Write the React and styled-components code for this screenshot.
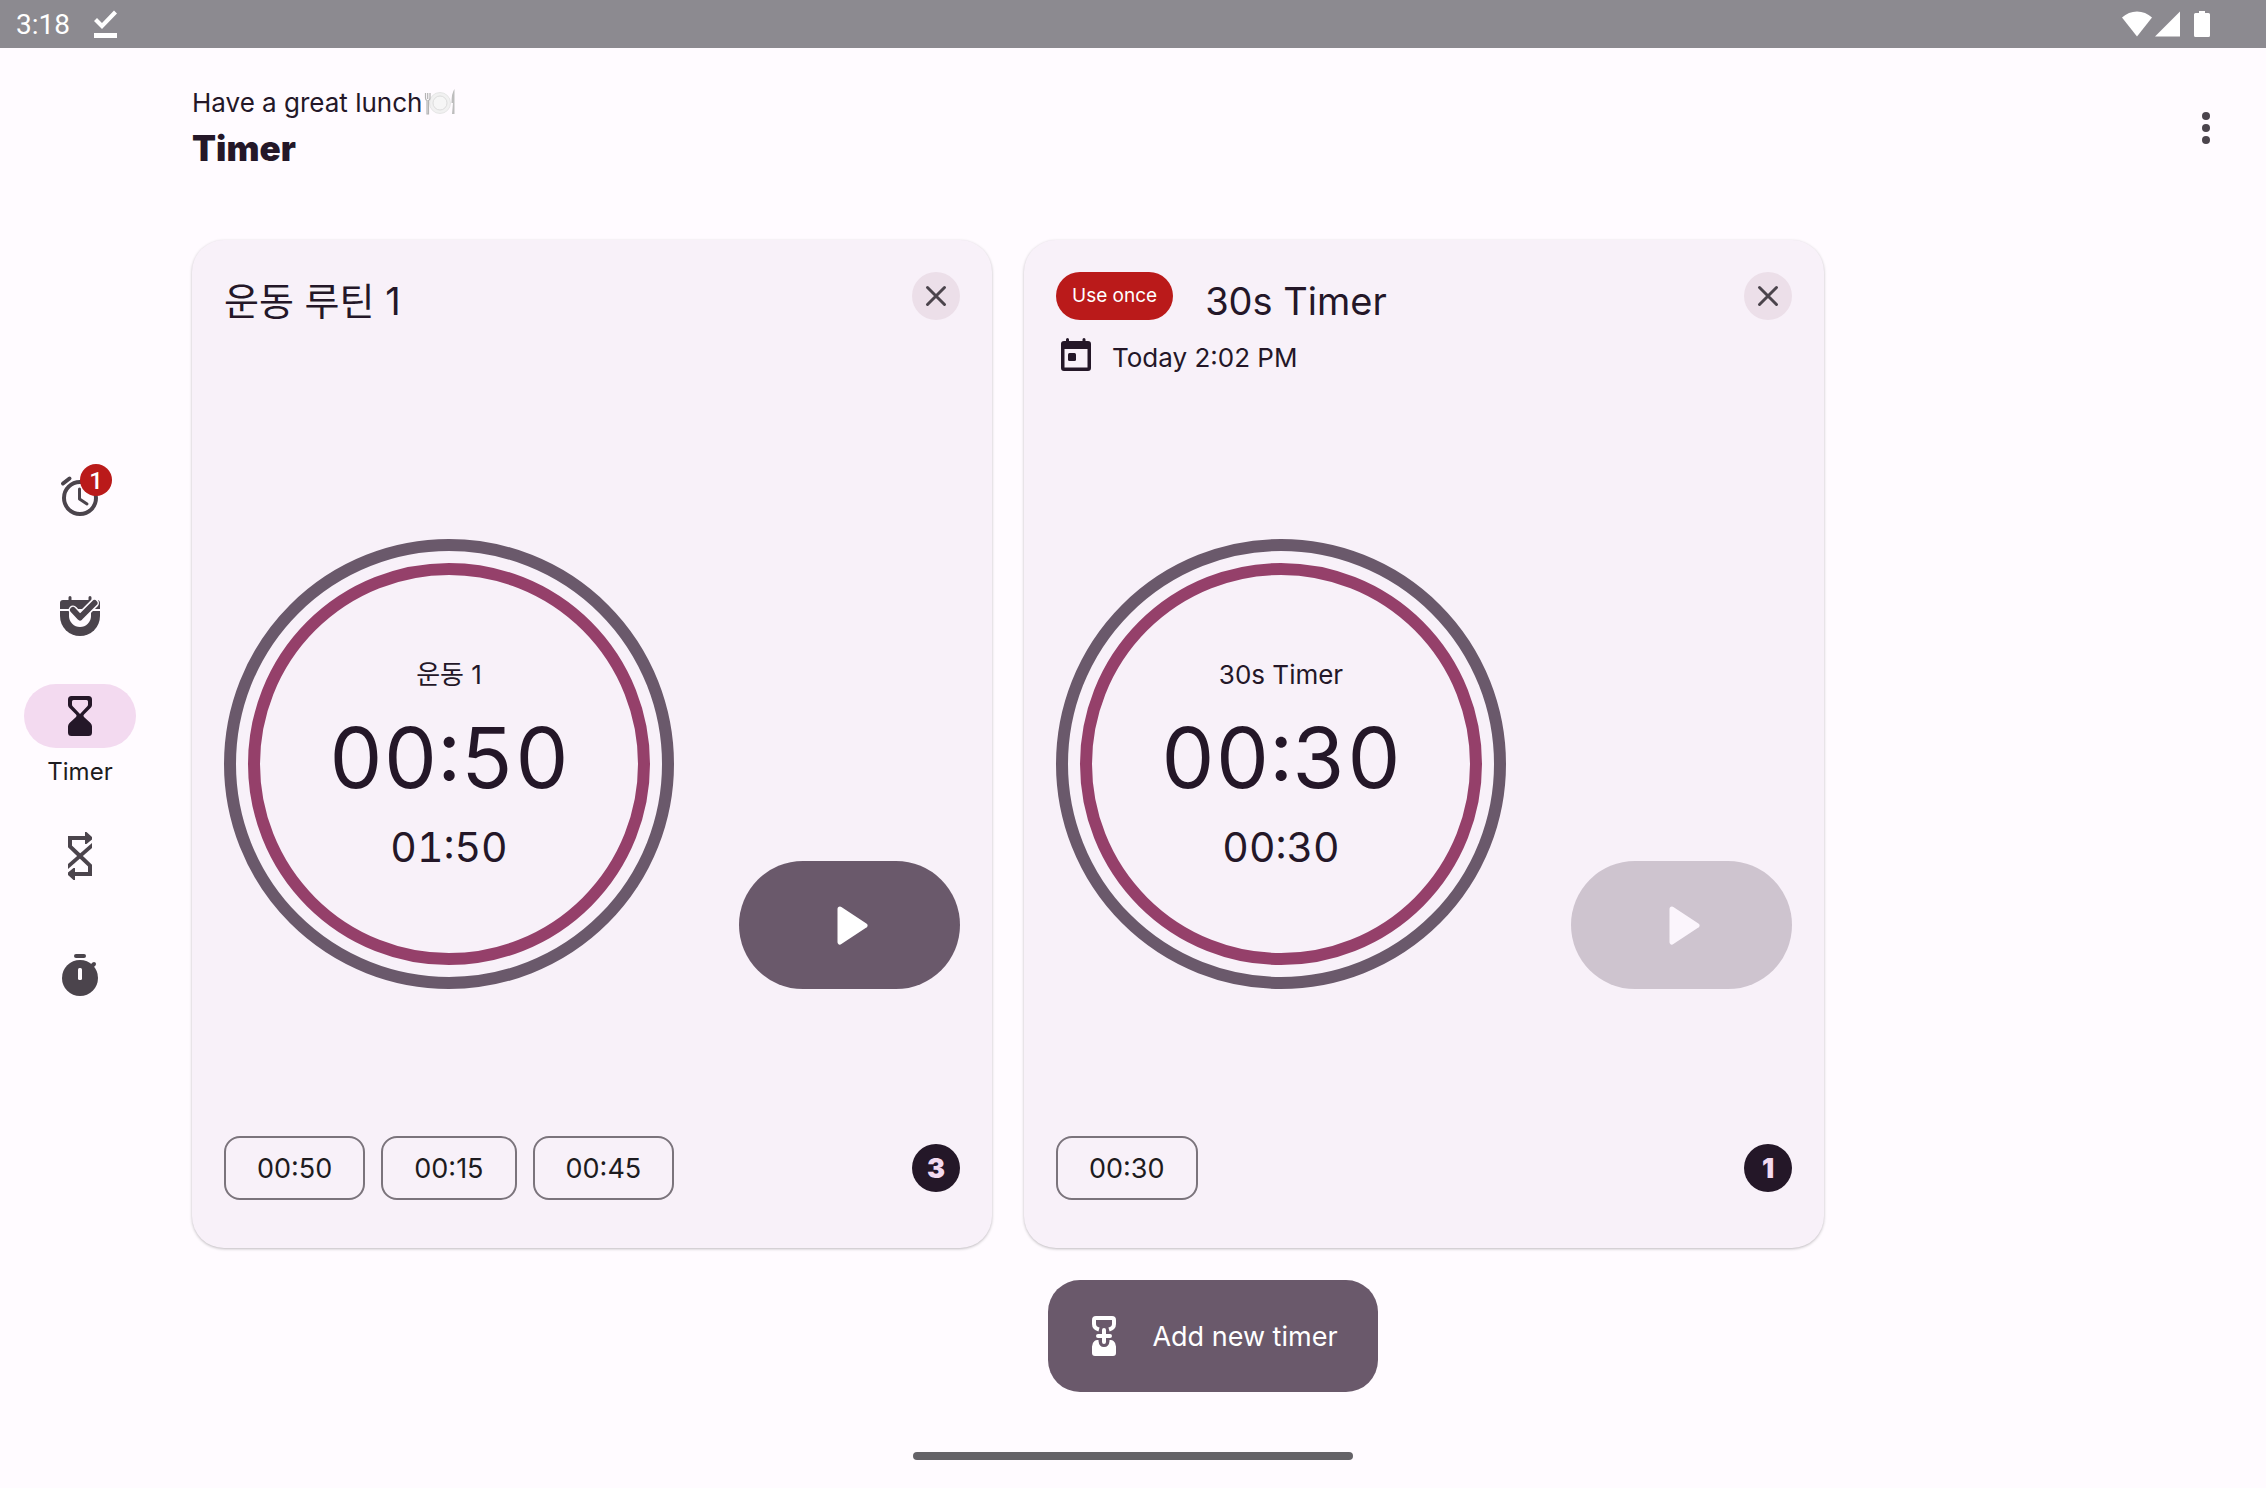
import { useState } from "react";
import styled, { createGlobalStyle } from "styled-components";

const GlobalStyle = createGlobalStyle`
  * {
    box-sizing: border-box;
  }
  body {
    margin: 0;
    background: #fffbff;
    color: #241728;
    font-family: Inter, "Noto Sans CJK KR", sans-serif;
    font-size: 26px;
  }
  button {
    border: none;
    padding: 0;
    font: inherit;
    color: inherit;
    cursor: pointer;
  }
  svg {
    display: block;
    flex-shrink: 0;
  }
`;

const Page = styled.div`
  min-height: 100vh;
  display: flex;
  flex-direction: column;
`;

const StatusBar = styled.div`
  height: 48px;
  padding: 0 56px 0 16px;
  display: flex;
  align-items: center;
  justify-content: space-between;
  background: #8c8a90;
  color: #ffffff;
  font-family: Roboto, sans-serif;
  font-size: 28px;
`;

const StatusGroup = styled.div`
  display: flex;
  align-items: center;
  gap: ${(props) => props.$gap}px;
`;

const Body = styled.div`
  flex: 1;
  display: flex;
`;

const Rail = styled.nav`
  width: 160px;
  flex-shrink: 0;
  padding-bottom: 64px;
  display: flex;
  flex-direction: column;
  align-items: center;
  justify-content: center;
  gap: 8px;
`;

const RailItem = styled.button`
  width: 112px;
  height: 112px;
  display: flex;
  flex-direction: column;
  align-items: center;
  justify-content: center;
  gap: 8px;
  background: transparent;
  color: ${(props) => (props.$active ? "#241728" : "#4b444c")};
`;

const RailIcon = styled.span`
  position: relative;
  width: 112px;
  height: 64px;
  display: flex;
  align-items: center;
  justify-content: center;
  border-radius: 32px;
  background: ${(props) => (props.$active ? "#f3daf0" : "transparent")};
`;

const RailLabel = styled.span`
  font-size: 24px;
  line-height: 32px;
  color: #1d1b20;
`;

const RailBadge = styled.span`
  position: absolute;
  top: 0;
  right: 24px;
  width: 32px;
  height: 32px;
  border-radius: 50%;
  background: #ba1a1a;
  color: #ffffff;
  font-family: Roboto, sans-serif;
  font-size: 24px;
  font-weight: 500;
  line-height: 34px;
  text-align: center;
`;

const Main = styled.main`
  flex: 1;
  min-width: 0;
  display: flex;
  flex-direction: column;
`;

const Header = styled.header`
  height: 160px;
  margin-bottom: 32px;
  padding: 0 36px 0 32px;
  display: flex;
  align-items: center;
  justify-content: space-between;
`;

const Greeting = styled.p`
  margin: 0;
  display: flex;
  align-items: center;
  line-height: 40px;
`;

const Title = styled.h1`
  margin: 0;
  font-size: 35px;
  font-weight: 900;
  line-height: 50px;
`;

const MenuButton = styled.button`
  width: 48px;
  height: 48px;
  background: transparent;
  color: #4b444c;
`;

const CardGrid = styled.div`
  flex: 1;
  padding: 0 32px;
  display: grid;
  grid-template-columns: repeat(auto-fill, minmax(0, 800px));
  gap: 32px;
`;

const Card = styled.section`
  padding: 32px 32px 48px;
  display: flex;
  flex-direction: column;
  border-radius: 32px;
  background: #f8f1f9;
  box-shadow: 0 1px 3px rgba(0, 0, 0, 0.26);
`;

const CardHead = styled.div`
  min-height: 120px;
  display: flex;
  align-items: flex-start;
  justify-content: space-between;
`;

const CardTitleRow = styled.div`
  display: flex;
  align-items: flex-start;
  gap: 32px;
`;

const CardTitle = styled.h2`
  margin: 0;
  font-size: 38px;
  font-weight: 400;
  line-height: 58px;
`;

const OnceTag = styled.span`
  padding: 0 16px;
  border-radius: 24px;
  background: #ba1a1a;
  color: #ffffff;
  font-size: 19px;
  line-height: 48px;
`;

const DateRow = styled.div`
  margin-top: 4px;
  display: flex;
  align-items: flex-start;
  gap: 16px;
  line-height: 48px;
`;

const CloseButton = styled.button`
  width: 48px;
  height: 48px;
  border-radius: 50%;
  background: #ecdfe9;
  color: #4b444c;
`;

const CardBody = styled.div`
  flex: 1;
  display: flex;
  flex-direction: column;
  justify-content: center;
`;

const DialRow = styled.div`
  display: flex;
  align-items: flex-end;
  justify-content: space-between;
`;

const OuterRing = styled.div`
  width: 450px;
  height: 450px;
  padding: 12px;
  border: 12px solid #6a596b;
  border-radius: 50%;
`;

const InnerRing = styled.div`
  height: 100%;
  display: flex;
  flex-direction: column;
  align-items: center;
  justify-content: center;
  border: 12px solid #95406a;
  border-radius: 50%;
`;

const DialLabel = styled.div`
  line-height: 40px;
`;

const DialTime = styled.div`
  font-size: 84px;
  line-height: 126px;
  font-variant-numeric: tabular-nums;
`;

const DialTotal = styled.div`
  font-size: 41px;
  line-height: 52px;
  font-variant-numeric: tabular-nums;
`;

const PlayButton = styled.button`
  width: 221px;
  height: 128px;
  display: flex;
  align-items: center;
  justify-content: center;
  border-radius: 64px;
  background: #6a596b;
  color: #ffffff;

  &:disabled {
    background: #cec4cf;
    color: #fbf5fc;
    cursor: default;
  }
`;

const CardFoot = styled.div`
  display: flex;
  align-items: center;
  justify-content: space-between;
`;

const Chips = styled.div`
  display: flex;
  gap: 16px;
`;

const Chip = styled.button`
  height: 64px;
  padding: 0 31px;
  border: 2px solid #7b747c;
  border-radius: 16px;
  background: transparent;
  color: #1d1b20;
  font-size: 27px;
`;

const Count = styled.span`
  width: 48px;
  height: 48px;
  border-radius: 50%;
  background: #241728;
  color: #f3daf0;
  font-size: 27px;
  font-weight: 900;
  line-height: 50px;
  text-align: center;
`;

const AddButton = styled.button`
  align-self: center;
  height: 112px;
  margin: 32px 0 96px;
  padding: 0 40px 0 32px;
  display: flex;
  align-items: center;
  gap: 24px;
  border-radius: 32px;
  background: #6a596b;
  color: #ffffff;
  font-size: 27px;
`;

const GestureBar = styled.div`
  position: fixed;
  bottom: 28px;
  left: 50%;
  width: 440px;
  height: 8px;
  margin-left: -220px;
  border-radius: 4px;
  background: #646267;
`;

const Icon = ({ size = 48, children }) => (
  <svg width={size} height={size} viewBox={`0 0 ${size} ${size}`} fill="currentColor" aria-hidden="true">
    {children}
  </svg>
);

const AlarmIcon = () => (
  <Icon>
    <g fill="none" stroke="currentColor" strokeLinecap="round" strokeLinejoin="round">
      <circle cx="24" cy="26" r="16" strokeWidth="4" />
      <path d="M23.500 17v10l7.500 5" strokeWidth="3" />
      <path d="M7 11.500l6.500-5M41 11.500l-6.500-5" strokeWidth="4" />
    </g>
  </Icon>
);

const RoutineIcon = () => (
  <Icon>
    <path d="M12.500 8V5.500a1.500 1.500 0 0 1 3 0V8h17V5.500a1.500 1.500 0 0 1 3 0V8H41a3 3 0 0 1 3 3v6H4v-6a3 3 0 0 1 3-3z" />
    <path d="M4 19h40v5a20 20 0 0 1-40 0z" />
    <path d="M13 19h22v5a11 11 0 0 1-22 0z" fill="#fffbff" />
    <path d="M17 18l7 7.500L38.500 11" fill="none" stroke="#fffbff" strokeWidth="9" strokeLinecap="round" strokeLinejoin="round" />
    <path d="M17 18l7 7.500L38.500 11" fill="none" stroke="currentColor" strokeWidth="6" strokeLinecap="round" strokeLinejoin="round" />
  </Icon>
);

const HourglassIcon = () => (
  <Icon>
    <path
      fillRule="evenodd"
      d="M15.500 4h17A3.500 3.500 0 0 1 36 7.500V13c0 1-.3 1.700-1 2.400L28 22.500q-1.200 1.200 0 2.400l6.500 6q1.500 1.600 1.500 3.600v6a3.500 3.500 0 0 1-3.500 3.500h-17a3.500 3.500 0 0 1-3.500-3.500v-6q0-2 1.500-3.600l6.500-6q1.200-1.200 0-2.400l-7-7.100c-.7-.7-1-1.400-1-2.400V7.500A3.500 3.500 0 0 1 15.500 4zM17.500 8A1.500 1.500 0 0 0 16 9.500v3q0 1 .7 1.700L24 22l7.300-7.800q.7-.7.7-1.700v-3A1.500 1.500 0 0 0 30.500 8z"
    />
  </Icon>
);

const IntervalIcon = () => (
  <Icon>
    <path d="M30 6H14v8.500L24 24l10 9.500V42H18" fill="none" stroke="currentColor" strokeWidth="4" />
    <path d="M36 11v5L12 37v-5z" />
    <path d="M29 0h1.500L36 5v2.500L30.500 12H29zM19 48h-1.500L12 43v-2.500l5.500-4.500H19z" />
  </Icon>
);

const StopwatchIcon = () => (
  <Icon>
    <rect x="18" y="2" width="12" height="4" rx="2" />
    <circle cx="24" cy="26" r="18" />
    <path d="M34 16l4-4" stroke="currentColor" strokeWidth="4" strokeLinecap="round" />
    <rect x="22" y="16" width="4" height="12" rx="1.500" fill="#fffbff" />
  </Icon>
);

const AddTimerIcon = () => (
  <Icon>
    <path d="M19 17.500q-5-1.500-5-5.500V8a2 2 0 0 1 2-2h16a2 2 0 0 1 2 2v4q0 4-5 5.500" fill="none" stroke="currentColor" strokeWidth="4" />
    <path d="M12 34.500q0-3.500 2.500-5.500 1.500-1.500 4-1v1q.5 6 5.500 6t5.500-6v-1q2.500-.5 4 1 2.500 2 2.500 5.500V41a3 3 0 0 1-3 3H15a3 3 0 0 1-3-3z" />
    <path d="M18 24h12M24 18v12" fill="none" stroke="currentColor" strokeWidth="4" strokeLinecap="round" />
  </Icon>
);

const CloseIcon = () => (
  <Icon>
    <path d="M15.500 15.500l17 17M32.500 15.500l-17 17" stroke="currentColor" strokeWidth="3" strokeLinecap="round" />
  </Icon>
);

const PlayIcon = () => (
  <Icon>
    <path d="M14 8l25 16.500L14 41z" stroke="currentColor" strokeWidth="5" strokeLinejoin="round" />
  </Icon>
);

const CalendarIcon = () => (
  <Icon size={40}>
    <path
      fillRule="evenodd"
      d="M10 7V5.500a1.500 1.500 0 0 1 3 0V7h13.500V5.500a1.500 1.500 0 0 1 3 0V7H32a3 3 0 0 1 3 3v24a3 3 0 0 1-3 3H8a3 3 0 0 1-3-3V10a3 3 0 0 1 3-3zM8.500 15v18.500h23V15z"
    />
    <rect x="12" y="19" width="8" height="8" rx="1.500" />
  </Icon>
);

const MoreIcon = () => (
  <Icon>
    <circle cx="24" cy="12" r="4" />
    <circle cx="24" cy="24" r="4" />
    <circle cx="24" cy="36" r="4" />
  </Icon>
);

const PlateIcon = () => (
  <svg width="34" height="32" viewBox="0 0 34 32" role="img" aria-label="plate with cutlery">
    <circle cx="18" cy="16" r="10.500" fill="#f1f1f1" stroke="#e6e6e6" />
    <circle cx="18" cy="16" r="7" fill="#f6f6f6" stroke="#dddddd" />
    <path d="M3.500 6v5q0 2 1.500 2.500V27h1.500V13.500Q8 13 8 11V6M5.700 6v6" fill="none" stroke="#b4b4b4" strokeWidth="1.200" />
    <path d="M32.500 2q-3 4-3 14H31l-1 11h2.500z" fill="#bdbdbd" />
  </svg>
);

const DoneIcon = () => (
  <svg width="24" height="30" viewBox="0 0 24 30" fill="currentColor" aria-hidden="true">
    <path d="M0 12l3-3 5 5L20 1.500l3 3L8 20zM0 24h23v5H0z" />
  </svg>
);

const WifiIcon = () => (
  <svg width="30" height="26" viewBox="0 0 30 26" fill="currentColor" aria-hidden="true">
    <path d="M0 6.500Q6.500.5 15 .5t15 6L15 25.500z" />
  </svg>
);

const SignalIcon = () => (
  <svg width="25" height="26" viewBox="0 0 25 26" fill="currentColor" aria-hidden="true">
    <path d="M25 .5v25H0z" />
  </svg>
);

const BatteryIcon = () => (
  <svg width="16" height="26" viewBox="0 0 16 26" fill="currentColor" aria-hidden="true">
    <path d="M5 0h6v2h3.500A1.500 1.500 0 0 1 16 3.500v21a1.500 1.500 0 0 1-1.500 1.500h-13A1.500 1.500 0 0 1 0 24.500v-21A1.500 1.500 0 0 1 1.500 2H5z" />
  </svg>
);

const tabs = [
  { id: "alarm", name: "Alarm", icon: AlarmIcon, badge: 1 },
  { id: "routine", name: "Routine", icon: RoutineIcon },
  { id: "timer", name: "Timer", icon: HourglassIcon },
  { id: "interval", name: "Interval", icon: IntervalIcon },
  { id: "stopwatch", name: "Stopwatch", icon: StopwatchIcon },
];

const timers = [
  {
    title: "운동 루틴 1",
    step: "운동 1",
    time: "00:50",
    total: "01:50",
    laps: ["00:50", "00:15", "00:45"],
  },
  {
    title: "30s Timer",
    once: true,
    date: "Today 2:02 PM",
    step: "30s Timer",
    time: "00:30",
    total: "00:30",
    laps: ["00:30"],
    disabled: true,
  },
];

function TimerCard({ timer }) {
  return (
    <Card>
      <CardHead>
        <div>
          <CardTitleRow>
            {timer.once && <OnceTag>Use once</OnceTag>}
            <CardTitle>{timer.title}</CardTitle>
          </CardTitleRow>
          {timer.date && (
            <DateRow>
              <CalendarIcon />
              <span>{timer.date}</span>
            </DateRow>
          )}
        </div>
        <CloseButton aria-label="Delete timer">
          <CloseIcon />
        </CloseButton>
      </CardHead>
      <CardBody>
        <DialRow>
          <OuterRing>
            <InnerRing>
              <DialLabel>{timer.step}</DialLabel>
              <DialTime>{timer.time}</DialTime>
              <DialTotal>{timer.total}</DialTotal>
            </InnerRing>
          </OuterRing>
          <PlayButton aria-label="Start" disabled={timer.disabled}>
            <PlayIcon />
          </PlayButton>
        </DialRow>
      </CardBody>
      <CardFoot>
        <Chips>
          {timer.laps.map((lap) => (
            <Chip key={lap}>{lap}</Chip>
          ))}
        </Chips>
        <Count>{timer.laps.length}</Count>
      </CardFoot>
    </Card>
  );
}

function App() {
  const [tab, setTab] = useState("timer");

  return (
    <Page>
      <GlobalStyle />
      <StatusBar>
        <StatusGroup $gap={24}>
          <span>3:18</span>
          <DoneIcon />
        </StatusGroup>
        <StatusGroup $gap={14}>
          <StatusGroup $gap={3}>
            <WifiIcon />
            <SignalIcon />
          </StatusGroup>
          <BatteryIcon />
        </StatusGroup>
      </StatusBar>
      <Body>
        <Rail>
          {tabs.map(({ id, name, icon: TabIcon, badge }) => (
            <RailItem key={id} $active={tab === id} aria-label={name} onClick={() => setTab(id)}>
              <RailIcon $active={tab === id}>
                <TabIcon />
                {badge && <RailBadge>{badge}</RailBadge>}
              </RailIcon>
              {tab === id && <RailLabel>{name}</RailLabel>}
            </RailItem>
          ))}
        </Rail>
        <Main>
          <Header>
            <div>
              <Greeting>
                Have a great lunch
                <PlateIcon />
              </Greeting>
              <Title>Timer</Title>
            </div>
            <MenuButton aria-label="More options">
              <MoreIcon />
            </MenuButton>
          </Header>
          <CardGrid>
            {timers.map((timer) => (
              <TimerCard key={timer.title} timer={timer} />
            ))}
          </CardGrid>
          <AddButton>
            <AddTimerIcon />
            Add new timer
          </AddButton>
        </Main>
      </Body>
      <GestureBar />
    </Page>
  );
}

export default App;
